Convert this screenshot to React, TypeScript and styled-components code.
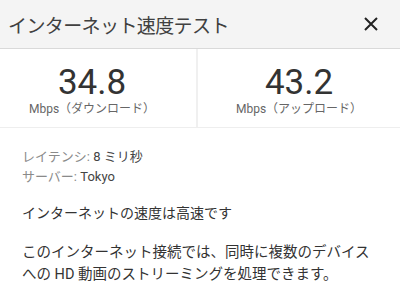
import styled, { createGlobalStyle } from "styled-components";

const GlobalStyle = createGlobalStyle`
    html, body {
        margin: 0;
        padding: 0;
        background: #ffffff;
    }
    body {
        font-family: Roboto, "Liberation Sans", "Noto Sans CJK JP", sans-serif;
        color: #333;
    }
`;

const Panel = styled.div`
    width: 400px;
    height: 300px;
    overflow: hidden;
    background: #fff;
`;

const Header = styled.div`
    height: 49px;
    background: #f4f4f4;
    border-bottom: 1px solid #d9d9d9;
    display: flex;
    align-items: center;
    justify-content: space-between;
    padding: 0 21px 0 8px;
    box-sizing: border-box;
`;

const Title = styled.h1`
    margin: 0;
    font-size: 19px;
    letter-spacing: -0.6px;
    font-weight: 400;
    color: #404040;
    font-family: "Noto Sans CJK JP", sans-serif;
`;

const CloseButton = styled.button`
    border: none;
    background: none;
    padding: 0;
    width: 16px;
    height: 16px;
    display: flex;
    align-items: center;
    justify-content: center;
    cursor: pointer;
`;

const Stats = styled.div`
    display: grid;
    grid-template-columns: 198px 1fr;
    height: 78px;
    border-bottom: 1px solid #eeeeee;
`;

const Stat = styled.div<{ $first?: boolean }>`
    display: flex;
    flex-direction: column;
    align-items: center;
    justify-content: center;
    padding-right: ${(p) => (p.$first ? "12px" : "0")};
    border-right: ${(p) => (p.$first ? "2px solid #f0f0f0" : "none")};
`;

const Value = styled.div`
    font-size: 35px;
    line-height: 36px;
    color: #333;
    font-family: Roboto, "Liberation Sans", sans-serif;
    margin-top: 6px;
`;

const Unit = styled.div`
    font-size: 12px;
    line-height: 16px;
    color: #666;
    font-family: Roboto, "Liberation Sans", "Noto Sans CJK JP", sans-serif;
`;

const Details = styled.div`
    padding: 19px 22px 0;
`;

const InfoList = styled.div`
    font-size: 13px;
    line-height: 20px;
`;

const Label = styled.span`
    color: #8a8a8a;
`;

const InfoValue = styled.span`
    color: #444;
`;

const Verdict = styled.p`
    margin: 15px 0 0;
    font-size: 14px;
    line-height: 22px;
    color: #333;
`;

const Description = styled.p`
    margin: 18px 0 0;
    font-size: 14.5px;
    line-height: 22px;
    color: #333;
`;

export default function App() {
    return <Panel>
        <GlobalStyle />
        <Header>
            <Title>インターネット速度テスト</Title>
            <CloseButton aria-label="閉じる">
                <svg width="14" height="14" viewBox="0 0 14 14">
                    <path d="M1 1 L13 13 M13 1 L1 13" stroke="#222" strokeWidth="2" />
                </svg>
            </CloseButton>
        </Header>
        <Stats>
            <Stat $first>
                <Value>34.8</Value>
                <Unit>Mbps（ダウンロード）</Unit>
            </Stat>
            <Stat>
                <Value>43.2</Value>
                <Unit>Mbps（アップロード）</Unit>
            </Stat>
        </Stats>
        <Details>
            <InfoList>
                <div><Label>レイテンシ:</Label> <InfoValue>8 ミリ秒</InfoValue></div>
                <div><Label>サーバー:</Label> <InfoValue>Tokyo</InfoValue></div>
            </InfoList>
            <Verdict>インターネットの速度は高速です</Verdict>
            <Description>このインターネット接続では、同時に複数のデバイスへの HD 動画のストリーミングを処理できます。</Description>
        </Details>
    </Panel>
}
